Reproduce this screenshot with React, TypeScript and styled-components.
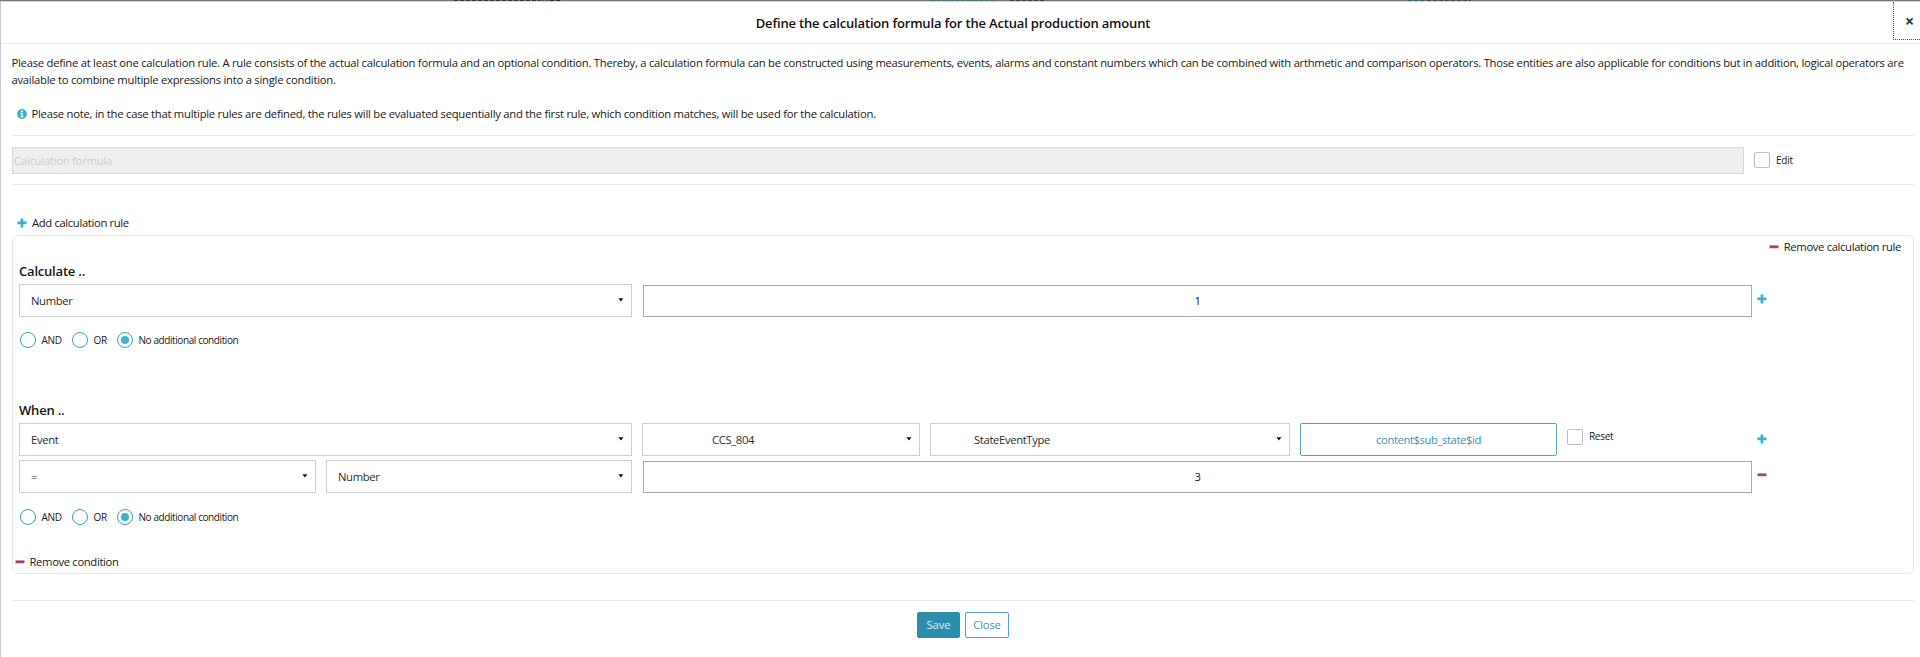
import React from 'react';
import styled, { createGlobalStyle } from 'styled-components';

const Global = createGlobalStyle`
  *, *::before, *::after { box-sizing: border-box; }
  body { margin: 0; background: #fff; color: #202020; font-family: "Open Sans", "Noto Sans", sans-serif; font-size: 11px; }
`;

const Page = styled.div`
  display: flex;
  flex-direction: column;
  height: 657px;
  overflow: hidden;
`;
const Backdrop = styled.div`
  display: flex;
  flex: none;
  height: 1px;
  background: #777577;
`;
const Sliver = styled.i<{ $gap: number; $w: number; $color: string }>`
  width: ${(p) => p.$w}px;
  margin-left: ${(p) => p.$gap}px;
  background: repeating-linear-gradient(90deg, ${(p) => p.$color} 0 4px, #777577 4px 6px);
`;
const Dialog = styled.main`
  display: flex;
  flex: 1;
  flex-direction: column;
  border-left: 1px solid #c9c9c9;
`;
const Header = styled.header`
  display: flex;
  flex: none;
  height: 43px;
  border-top: 1px solid #d6d6d6;
  border-bottom: 1px solid #ebebeb;
`;
const Text = styled.span<{ $ls?: number; $size?: number }>`
  white-space: pre;
  font-size: ${(p) => p.$size ?? 11.25}px;
  letter-spacing: ${(p) => p.$ls ?? -0.35}px;
`;
const Title = styled.h1`
  flex: 1;
  margin: 0 0 0 12px;
  text-align: center;
  font-size: 13px;
  line-height: 42px;
  font-weight: 600;
  color: #111;
  letter-spacing: -0.17px;
`;
const CloseButton = styled.button`
  width: 27px;
  height: 38px;
  margin: 0;
  padding: 0 0 0 5px;
  border: 1px dotted #555;
  border-top: 0;
  border-right: 0;
  background: #fff;
  font: 700 16px/36px "Open Sans", sans-serif;
  color: #333;
`;
const Body = styled.div`
  display: flex;
  flex-direction: column;
  padding: 10px 6px 0 11px;
`;
const Intro = styled.p`
  display: flex;
  flex-direction: column;
  margin: 0 0 0 -0.5px;
  line-height: 17px;
`;
const Note = styled.p`
  display: flex;
  align-items: center;
  margin: 17px 0 13px;
  padding-left: 4.5px;
  height: 17px;
  gap: 5px;
`;
const Rule = styled.hr<{ $top?: number }>`
  width: 100%;
  height: 1px;
  margin: ${(p) => p.$top ?? 0}px 0 0;
  border: 0;
  background: #e8e8e8;
`;
const FormulaRow = styled.div`
  display: flex;
  align-items: center;
  height: 48px;
  gap: 10px;
`;
const Formula = styled.div`
  width: 1732px;
  height: 27px;
  padding-left: 1px;
  border: 1px solid #d8d8d8;
  background: #efefef;
  color: #cdcdcd;
  line-height: 25px;
`;
const CheckLabel = styled.label`
  display: flex;
  align-items: center;
  gap: 6px;
  height: 16px;
`;
const Box = styled.span`
  width: 16px;
  height: 16px;
  border: 1px solid #b9bec7;
  border-radius: 2px;
`;
const Action = styled.div`
  display: flex;
  align-items: center;
  height: 18px;
  gap: 5px;
  ${Text} {
    padding-bottom: 2px;
  }
`;
const AddAction = styled(Action)`
  margin: 29px 0 3px;
  padding-left: 5px;
`;
const Card = styled.section`
  display: flex;
  flex-direction: column;
  height: 339px;
  padding: 2px 12px 0 6px;
  border: 1px solid #e6e8ea;
  border-radius: 6px;
`;
const RemoveRule = styled(Action)`
  align-self: flex-end;
`;
const Heading = styled.h2<{ $top: number }>`
  margin: ${(p) => p.$top}px 0 0;
  height: 22px;
  font-size: 13px;
  line-height: 19px;
  font-weight: 600;
  color: #161616;
  letter-spacing: -0.2px;
`;
const Row = styled.div`
  display: flex;
  gap: 10px;
  height: 33px;
`;
const SecondRow = styled(Row)`
  margin-top: 4px;
`;
const SelectBox = styled.div<{ $w: number; $pad?: number }>`
  display: flex;
  flex: none;
  align-items: center;
  justify-content: space-between;
  width: ${(p) => p.$w}px;
  height: 33px;
  padding: 0 7px 1px ${(p) => p.$pad ?? 11}px;
  border: 1px solid #cfcfcf;
  color: #2c2c2c;
`;
const Entry = styled.div`
  display: flex;
  flex: none;
  align-items: center;
  justify-content: center;
  width: 1109px;
  height: 32px;
  margin: 1px 0 0 1px;
  padding-bottom: 2px;
  border: 1px solid #a9a9a9;
`;
const RowIcon = styled.span<{ $top: number }>`
  display: flex;
  margin-left: -5px;
  padding-top: ${(p) => p.$top}px;
`;
const PathButton = styled.button`
  width: 257px;
  height: 33px;
  margin: 0;
  padding: 0 0 1px;
  border: 1px solid #55a5c0;
  border-radius: 2px;
  background: #fff;
  color: #4092b0;
  font: 11px "Open Sans", sans-serif;
`;
const ResetSlot = styled.div`
  width: 185px;
  padding-top: 6px;
  ${Text} {
    padding-bottom: 2px;
  }
`;
const Radios = styled.div<{ $top: number }>`
  display: flex;
  height: 16px;
  margin: ${(p) => p.$top}px 0 0 1px;
`;
const RadioLabel = styled.label<{ $w: number }>`
  display: flex;
  align-items: center;
  gap: 5.5px;
  width: ${(p) => p.$w}px;
`;
const Dot = styled.span<{ $on?: boolean }>`
  display: grid;
  place-items: center;
  flex: none;
  width: 16px;
  height: 16px;
  border: 1px solid #3d9dba;
  border-radius: 50%;
  &::after {
    content: "";
    width: 8px;
    height: 8px;
    border-radius: 50%;
    background: ${(p) => (p.$on ? '#39b3cf' : 'transparent')};
  }
`;
const RemoveCondition = styled(Action)`
  margin: 28px 0 0 -4.5px;
`;
const Footer = styled.footer`
  display: flex;
  justify-content: center;
  gap: 5px;
  padding: 11px 0 0;
`;
const FooterButton = styled.button<{ $primary?: boolean; $w: number }>`
  width: ${(p) => p.$w}px;
  height: 26px;
  margin: 0;
  padding: 0 0 1px;
  border: 1px solid ${(p) => (p.$primary ? '#2d8dad' : '#55a5c0')};
  border-radius: 2px;
  background: ${(p) => (p.$primary ? '#2d8dad' : '#fff')};
  color: ${(p) => (p.$primary ? '#dff2f8' : '#4092b0')};
  font: 11px "Open Sans", sans-serif;
`;

const Plus = () => (
  <svg width="10" height="10" viewBox="0 0 10 10">
    <path d="M3.6 .5h2.7v3.1h3.2v2.7H6.3v3.2H3.6V6.3H.4V3.6h3.2z" fill="#3bb3cf" />
  </svg>
);
const Minus = () => (
  <svg width="10" height="10" viewBox="0 0 10 10">
    <path d="M.5 3.4h9v2.8h-9z" fill="#b04062" />
  </svg>
);
const Info = () => (
  <svg width="10" height="10" viewBox="0 0 10 10">
    <circle cx="5" cy="5" r="4.9" fill="#3bb3cf" />
    <path d="M4.2 1.5h1.5v1.4H4.2zM3.6 3.8h2.1v3.4h.7v1H3.6v-1h.7V4.7h-.7z" fill="#fff" />
  </svg>
);
const Caret = () => (
  <svg width="6" height="4" viewBox="0 0 6 4">
    <path d="M.4.3h5L2.9 3.5z" fill="#111" />
  </svg>
);

const Select = ({ w, pad, children }: { w: number; pad?: number; children: string }) => (
  <SelectBox $w={w} $pad={pad}>
    <Text>{children}</Text>
    <Caret />
  </SelectBox>
);
const Conditions = ({ top }: { top: number }) => (
  <Radios $top={top}>
    <RadioLabel $w={52}><Dot /><Text $size={10} $ls={-0.3}>AND</Text></RadioLabel>
    <RadioLabel $w={45}><Dot /><Text $size={10} $ls={-0.3}>OR</Text></RadioLabel>
    <RadioLabel $w={130}><Dot $on /><Text $size={10} $ls={-0.41}>No additional condition</Text></RadioLabel>
  </Radios>
);

export default function App() {
  return (
    <Page>
      <Global />
      <Backdrop>
        <Sliver $gap={454} $w={86} $color="#393438" />
        <Sliver $gap={0} $w={9} $color="#2f6575" />
        <Sliver $gap={1} $w={10} $color="#2b2629" />
        <Sliver $gap={371} $w={66} $color="#4a7380" />
        <Sliver $gap={13} $w={36} $color="#3d393c" />
        <Sliver $gap={362} $w={16} $color="#2f6575" />
        <Sliver $gap={3} $w={44} $color="#4b474a" />
      </Backdrop>
      <Dialog>
        <Header>
          <Title>Define the calculation formula for the Actual production amount</Title>
          <CloseButton>×</CloseButton>
        </Header>
        <Body>
          <Intro>
            <Text $ls={-0.253}>Please define at least one calculation rule. A rule consists of the actual calculation formula and an optional condition. Thereby, a calculation formula can be constructed using measurements, events, alarms and constant numbers which can be combined with arthmetic and comparison operators. Those entities are also applicable for conditions but in addition, logical operators are</Text>
            <Text $ls={-0.253}>available to combine multiple expressions into a single condition.</Text>
          </Intro>
          <Note>
            <Info />
            <Text $ls={-0.246}>Please note, in the case that multiple rules are defined, the rules will be evaluated sequentially and the first rule, which condition matches, will be used for the calculation.</Text>
          </Note>
          <Rule />
          <FormulaRow>
            <Formula><Text $ls={-0.243}>Calculation formula</Text></Formula>
            <CheckLabel><Box /><Text $size={10} $ls={-0.2}>Edit</Text></CheckLabel>
          </FormulaRow>
          <Rule />
          <AddAction><Plus /><Text>Add calculation rule</Text></AddAction>
          <Card>
            <RemoveRule><Minus /><Text>Remove calculation rule</Text></RemoveRule>
            <Heading $top={6}>Calculate ..</Heading>
            <Row>
              <Select w={613}>Number</Select>
              <Entry><Text>1</Text></Entry>
              <RowIcon $top={10}><Plus /></RowIcon>
            </Row>
            <Conditions top={15} />
            <Heading $top={53}>When ..</Heading>
            <Row>
              <Select w={613}>Event</Select>
              <Select w={278} pad={69}>CCS_804</Select>
              <Select w={360} pad={43}>StateEventType</Select>
              <PathButton><Text $ls={-0.4}>content$sub_state$id</Text></PathButton>
              <ResetSlot><CheckLabel><Box /><Text $size={10} $ls={-0.3}>Reset</Text></CheckLabel></ResetSlot>
              <RowIcon $top={11}><Plus /></RowIcon>
            </Row>
            <SecondRow>
              <Select w={297}>=</Select>
              <Select w={306}>Number</Select>
              <Entry><Text>3</Text></Entry>
              <RowIcon $top={10}><Minus /></RowIcon>
            </SecondRow>
            <Conditions top={16} />
            <RemoveCondition><Minus /><Text>Remove condition</Text></RemoveCondition>
          </Card>
          <Rule $top={26} />
          <Footer>
            <FooterButton $primary $w={43}><Text $ls={-0.1}>Save</Text></FooterButton>
            <FooterButton $w={44}><Text $ls={-0.2}>Close</Text></FooterButton>
          </Footer>
        </Body>
      </Dialog>
    </Page>
  );
}
